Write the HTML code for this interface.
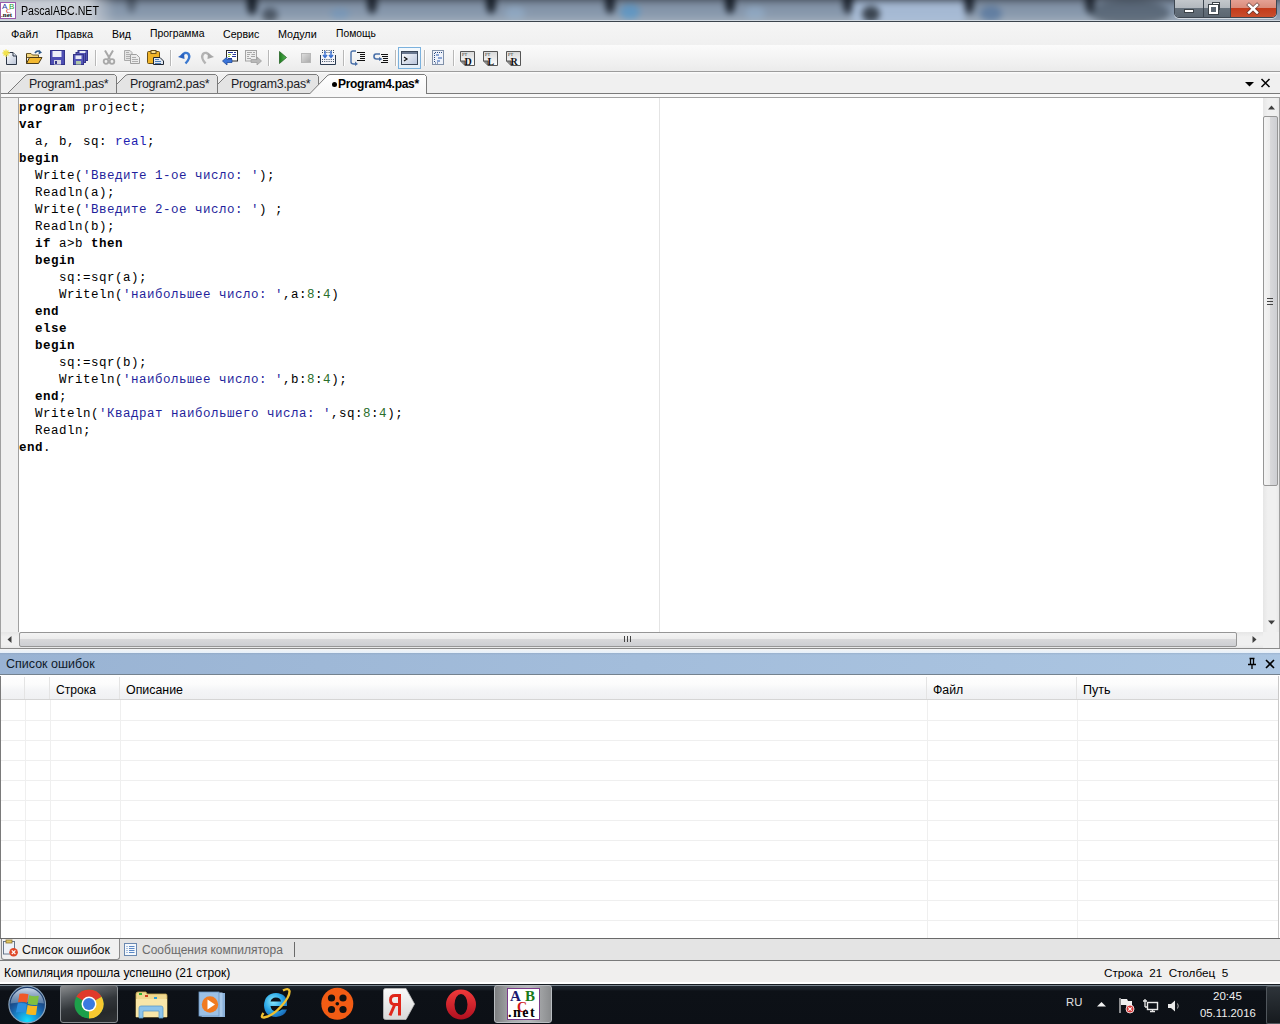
<!DOCTYPE html>
<html><head><meta charset="utf-8">
<style>
*{margin:0;padding:0;box-sizing:border-box}
html,body{width:1280px;height:1024px;overflow:hidden;background:#f0f0f0;font-family:"Liberation Sans",sans-serif;font-size:12px;color:#000;position:relative}
.a{position:absolute}
.t{position:absolute;white-space:nowrap;line-height:1}
svg{position:absolute;overflow:visible}
/* title */
#title{left:0;top:0;width:1280px;height:22px;overflow:hidden;
background:linear-gradient(#2e3946 0,#4a5868 2px,#7f90a5 5px,#8799ae 12px,#7a8ca2 19px,#d3dce6 20px,#d3dce6 21px,#3a424c 21px,#3a424c 22px)}
.notch{position:absolute;top:-4px;width:14px;height:18px;border-radius:50%;background:radial-gradient(ellipse at 50% 20%,rgba(10,15,22,.95),rgba(10,15,22,.6) 40%,rgba(10,15,22,0) 70%)}
.blob{position:absolute;border-radius:50%}
#menubar{left:0;top:22px;width:1280px;height:23px;background:linear-gradient(#f5f5f5,#f0f0f0)}
#toolbar{left:0;top:45px;width:1280px;height:26px;background:linear-gradient(#fbfbfb,#f5f5f5 40%,#ebebeb)}
.sep{position:absolute;top:5px;width:1px;height:16px;background:#b8b8b8;box-shadow:1px 0 0 #fff}
#tabstrip{left:0;top:71px;width:1280px;height:26px;background:linear-gradient(#fafafa 1px,#f0f0f0 2px);border-top:1px solid #9c9c9c}
#editor{left:0;top:97px;width:1280px;height:552px;background:#fff}
#code{left:19px;top:3px;font-family:"Liberation Mono",monospace;font-size:12.5px;letter-spacing:0.5px;line-height:17px;white-space:pre;color:#000}
.s{color:#1f1f9c}.n{color:#2a6e2a}.k{color:#2020b0}
#panelhdr{left:0;top:653px;width:1280px;height:23px;background:linear-gradient(rgba(130,150,175,.35),rgba(130,150,175,0) 2px,rgba(0,0,0,0) 21px,#74828f 21px,#74828f 22px,#fff 22px),linear-gradient(90deg,#99b3d3,#a3bddb 50%,#acc6e2)}
#gap{left:0;top:649px;width:1280px;height:4px;background:linear-gradient(#f4f4f4,#e6f0fa)}
#grid{left:0;top:676px;width:1280px;height:262px;background:#fff}
#bottomtabs{left:0;top:938px;width:1280px;height:23px;background:#e4e4e4}
#status{left:0;top:961px;width:1280px;height:23px;background:linear-gradient(#f0efee 21px,#fff 21px)}
#taskbar{left:0;top:984px;width:1280px;height:40px;background:linear-gradient(#1e252e 2px,#1a2129 5px,#0d1117 7px,#0c1016)}
</style></head><body>
<!-- TITLE -->
<div id="title" class="a">
<div id="glass" class="a" style="left:-10px;top:-6px;width:1300px;height:34px;filter:blur(3px);background:linear-gradient(#3c4552 0,#56606e 6px,#8090a4 10px,#8798ad 18px,#8d9db0 24px,#a2aebb 26px,#a2aebb 34px)">
<div class="blob" style="left:-10px;top:3px;width:135px;height:30px;border-radius:0;background:linear-gradient(90deg,#c8cdd5 80%,rgba(200,205,213,0))"></div>
<div class="blob" style="left:137px;top:0;width:9px;height:19px;border-radius:0 0 50% 50%;background:rgba(12,18,26,0.35)"></div>
<div class="blob" style="left:257px;top:0;width:10px;height:21px;border-radius:0 0 50% 50%;background:rgba(12,18,26,0.85)"></div>
<div class="blob" style="left:377px;top:0;width:10px;height:20px;border-radius:0 0 50% 50%;background:rgba(12,18,26,0.8)"></div>
<div class="blob" style="left:496px;top:0;width:10px;height:20px;border-radius:0 0 50% 50%;background:rgba(12,18,26,0.85)"></div>
<div class="blob" style="left:615px;top:0;width:10px;height:20px;border-radius:0 0 50% 50%;background:rgba(12,18,26,0.8)"></div>
<div class="blob" style="left:735px;top:0;width:10px;height:20px;border-radius:0 0 50% 50%;background:rgba(12,18,26,0.85)"></div>
<div class="blob" style="left:853px;top:0;width:10px;height:20px;border-radius:0 0 50% 50%;background:rgba(12,18,26,0.8)"></div>
<div class="blob" style="left:974px;top:0;width:10px;height:20px;border-radius:0 0 50% 50%;background:rgba(12,18,26,0.8)"></div>
<div class="blob" style="left:1095px;top:0;width:10px;height:20px;border-radius:0 0 50% 50%;background:rgba(12,18,26,0.75)"></div>
<div class="blob" style="left:272px;top:14px;width:16px;height:14px;background:rgba(25,32,42,.55)"></div>
<div class="blob" style="left:340px;top:14px;width:20px;height:12px;background:rgba(110,150,190,.55)"></div>
<div class="blob" style="left:630px;top:10px;width:20px;height:16px;background:rgba(70,150,210,.55)"></div>
<div class="blob" style="left:515px;top:12px;width:20px;height:14px;background:rgba(150,180,210,.5)"></div>
<div class="blob" style="left:755px;top:12px;width:20px;height:14px;background:rgba(150,180,210,.5)"></div>
<div class="blob" style="left:862px;top:8px;width:113px;height:22px;border-radius:4px;background:rgba(178,200,228,.7)"></div>
<div class="blob" style="left:872px;top:12px;width:18px;height:16px;background:rgba(40,48,58,.85)"></div>
<div class="blob" style="left:990px;top:12px;width:22px;height:16px;background:rgba(60,100,150,.5)"></div>
<div class="blob" style="left:1100px;top:6px;width:80px;height:26px;background:rgba(40,50,62,.45)"></div>
</div>
<div class="a" style="left:0;top:20px;width:1280px;height:1px;background:#d0d8e0"></div>
<div class="a" style="left:0;top:21px;width:1280px;height:1px;background:#3b434c"></div>
<!-- app icon -->
<div class="a" style="left:0px;top:2px;width:16px;height:17px;background:#fff;border:1px solid #9a5aaa"></div>
<div class="t" style="left:2px;top:3px;font-family:'Liberation Sans',sans-serif;font-size:8px;color:#2a3aa0">A</div>
<div class="t" style="left:9px;top:3px;font-family:'Liberation Sans',sans-serif;font-size:8px;color:#2a9a2a">B</div>
<div class="t" style="left:6px;top:8px;font-family:'Liberation Serif',serif;font-size:7px;color:#c01010">C</div>
<div class="t" style="left:1px;top:12px;font-family:'Liberation Serif',serif;font-weight:bold;font-size:7px;color:#111">.net</div>
<div class="t" style="left:21px;top:5px;font-size:12px;color:#000;transform:scaleX(0.885);transform-origin:0 0">PascalABC.NET</div>
<!-- window buttons -->
<div class="a" style="left:1174px;top:-2px;width:103px;height:20px;border:1px solid #3d4650;border-radius:0 0 5px 5px;box-shadow:0 1px 0 rgba(255,255,255,.6), inset 0 0 0 1px rgba(255,255,255,.45);overflow:hidden">
 <div class="a" style="left:0;top:0;width:28px;height:19px;background:linear-gradient(#c5c9cd 0,#b2b8be 9px,#66717c 9px,#5a6570 19px)"></div>
 <div class="a" style="left:28px;top:0;width:1px;height:19px;background:#3d4650"></div>
 <div class="a" style="left:29px;top:0;width:26px;height:19px;background:linear-gradient(#c5c9cd 0,#b2b8be 9px,#66717c 9px,#5a6570 19px)"></div>
 <div class="a" style="left:55px;top:0;width:1px;height:19px;background:#3d4650"></div>
 <div class="a" style="left:56px;top:0;width:47px;height:19px;background:linear-gradient(#e6a497 0,#d98b79 9px,#c33a1a 9px,#c9502f 19px)"></div>
</div>
<div class="a" style="left:1184px;top:9px;width:10px;height:4px;background:#fff;border:1px solid #3b4248"></div>
<div class="a" style="left:1212px;top:2px;width:8px;height:8px;border:1px solid #3b4248;background:#fff"></div>
<div class="a" style="left:1209px;top:5px;width:9px;height:9px;border:2px solid #fff;outline:1px solid #3b4248;background:#5a6570"></div>
<svg style="left:1246px;top:3px" width="14" height="11"><path d="M3 2 L11 9.5 M11 2 L3 9.5" stroke="#4a3030" stroke-width="4" stroke-linecap="square" opacity=".7"/><path d="M3 2 L11 9.5 M11 2 L3 9.5" stroke="#fff" stroke-width="2.4" stroke-linecap="square"/></svg>
</div>

<!-- MENU -->
<div id="menubar" class="a">
<span class="t" style="left:11px;top:7px;font-size:11px">Файл</span>
<span class="t" style="left:56px;top:7px;font-size:11px">Правка</span>
<span class="t" style="left:112px;top:7px;font-size:10.5px">Вид</span>
<span class="t" style="left:150px;top:7px;font-size:10.4px">Программа</span>
<span class="t" style="left:223px;top:7px;font-size:10.6px">Сервис</span>
<span class="t" style="left:278px;top:7px;font-size:10.8px">Модули</span>
<span class="t" style="left:336px;top:7px;font-size:10.3px">Помощь</span>
</div>

<!-- TOOLBAR -->
<div id="toolbar" class="a">
<svg style="left:2px;top:4px" width="16" height="16" viewBox="0 0 16 16">
 <defs><linearGradient id="pg" x1="0" y1="0" x2="1" y2="1"><stop offset="0" stop-color="#fff"/><stop offset="1" stop-color="#b9c3d6"/></linearGradient></defs>
 <path d="M4.5 3.5 H11 L14.5 7 V15.5 H4.5 Z" fill="url(#pg)" stroke="#2c3646"/>
 <path d="M11 3.5 V7 H14.5" fill="#dde3ee" stroke="#2c3646"/>
 <path d="M4 0.5 V8 M0.5 4 H8 M1.5 1.5 L6.5 6.5 M6.5 1.5 L1.5 6.5" stroke="#f2e24a" stroke-width="1.3"/>
</svg>
<svg style="left:26px;top:5px" width="17" height="15" viewBox="0 0 17 15">
 <path d="M0.5 3.5 H5 L6.5 5 H12.5 V7.5 H0.5 Z" fill="#f3d57a" stroke="#6e5a2a"/>
 <path d="M0.5 13.5 V4 M0.5 13.5 L3.5 7.5 H16 L12.5 13.5 Z" fill="#f2b830" stroke="#4a3a18"/>
 <path d="M9 3 Q11 0 14 1.5" fill="none" stroke="#2f5a8a" stroke-width="1.6"/>
 <path d="M13 0 L16 2.5 L12.5 4.5 Z" fill="#2f5a8a"/>
</svg>
<svg style="left:50px;top:5px" width="15" height="15" viewBox="0 0 15 15">
 <rect x="0.5" y="0.5" width="14" height="14" fill="#4e4fb4" stroke="#34358a"/>
 <rect x="2.5" y="1" width="9" height="6" fill="#eef0f8"/>
 <rect x="4" y="10" width="7" height="4.5" fill="#d8d8e4"/>
 <rect x="5" y="11" width="2" height="3" fill="#34358a"/>
</svg>
<svg style="left:73px;top:5px" width="15" height="15" viewBox="0 0 15 15">
 <rect x="5" y="0.5" width="9.5" height="10" fill="#5556b8" stroke="#34358a"/>
 <rect x="3" y="2.5" width="9.5" height="10" fill="#5556b8" stroke="#34358a"/>
 <rect x="0.5" y="4.5" width="10" height="10" fill="#5556b8" stroke="#34358a"/>
 <rect x="6.5" y="1" width="6" height="2" fill="#e8eaf6"/>
 <rect x="2.5" y="5.5" width="6" height="3.5" fill="#e8eaf6"/>
 <rect x="3" y="11" width="5" height="3.5" fill="#b0c8a8"/>
</svg>
<div class="sep" style="left:95px"></div>
<svg style="left:103px;top:5px" width="12" height="15" viewBox="0 0 12 15">
 <path d="M2 0.5 L7 9 M10 0.5 L5 9" stroke="#a8a8a8" stroke-width="2"/>
 <circle cx="3" cy="11.5" r="2.3" fill="none" stroke="#a8a8a8" stroke-width="1.8"/>
 <circle cx="9" cy="11.5" r="2.3" fill="none" stroke="#a8a8a8" stroke-width="1.8"/>
</svg>
<svg style="left:124px;top:5px" width="16" height="14" viewBox="0 0 16 14">
 <path d="M0.5 0.5 H6 L8 2.5 V10.5 H0.5 Z" fill="#e4e4e4" stroke="#aaa"/>
 <path d="M6.5 4.5 H12.5 L15.5 7.5 V13.5 H6.5 Z" fill="#ececec" stroke="#a0a0a0"/>
 <path d="M2 2.5 H5 M2 4.5 H6 M2 6.5 H6 M2 8.5 H6 M8 7.5 H12 M8 9.5 H14 M8 11.5 H14" stroke="#a8a8a8" stroke-width=".9"/>
</svg>
<svg style="left:147px;top:5px" width="17" height="15" viewBox="0 0 17 15">
 <rect x="0.5" y="1.5" width="12" height="12" rx="1" fill="#f0b428" stroke="#6a5018"/>
 <rect x="4" y="0.5" width="5" height="3" fill="#f8e090" stroke="#6a5018"/>
 <path d="M6.5 7.5 H13 L16.5 11 V14.5 H6.5 Z" fill="#dfe6f0" stroke="#1e2530"/>
 <path d="M8 9.5 H12 M8 11.5 H14 M8 13.5 H14" stroke="#3a70b0" stroke-width=".9"/>
</svg>
<div class="sep" style="left:170px"></div>
<svg style="left:178px;top:5px" width="13" height="15" viewBox="0 0 13 15">
 <path d="M3.5 6 Q7 1 10.5 4 Q13 8 7.5 13.5" fill="none" stroke="#3a78d0" stroke-width="2.4"/>
 <path d="M0 7 L6 3 L6.5 9 Z" fill="#2a62c0"/>
</svg>
<svg style="left:200px;top:5px" width="14" height="15" viewBox="0 0 14 15">
 <path d="M10 6 Q6.5 1 3 4 Q0.5 8 5.5 13.5" fill="none" stroke="#b4b4b4" stroke-width="2.4"/>
 <path d="M14 7 L8 3 L7.5 9 Z" fill="#a8a8a8"/>
</svg>
<svg style="left:222px;top:5px" width="17" height="16" viewBox="0 0 17 16">
 <rect x="4.5" y="0.5" width="11" height="10.5" fill="#fff" stroke="#2a2a2a"/>
 <path d="M6 2.5 H11 M12 2.5 H14 M6 4.5 H9 M10.5 4.5 H14 M6 6.5 H8 M10 6.5 H14 M6 8.5 H10" stroke="#2a3a9a"/>
 <path d="M6 4.5 H9 M6 6.5 H8" stroke="#8ab83a"/>
 <path d="M0.5 11 L5 7 V9.5 H10 V12.5 H5 V15 Z" fill="#3a74d8" stroke="#1e4a9a" stroke-width="0.8"/>
</svg>
<svg style="left:245px;top:5px" width="17" height="16" viewBox="0 0 17 16">
 <rect x="0.5" y="0.5" width="11" height="10.5" fill="#eee" stroke="#a4a4a4"/>
 <path d="M2 2.5 H7 M8 2.5 H10 M2 4.5 H5 M6.5 4.5 H10 M2 6.5 H4 M6 6.5 H10 M2 8.5 H6" stroke="#a8a8a8"/>
 <path d="M16.5 11 L12 7 V9.5 H6 V12.5 H12 V15 Z" fill="#b8b8b8" stroke="#a0a0a0" stroke-width="0.8"/>
</svg>
<div class="sep" style="left:268px"></div>
<svg style="left:279px;top:6px" width="8" height="13" viewBox="0 0 8 13">
 <defs><linearGradient id="gp" x1="0" y1="0" x2="1" y2="0"><stop offset="0" stop-color="#1d7a1d"/><stop offset="1" stop-color="#5ab85a"/></linearGradient></defs>
 <path d="M0.5 0.5 L7.5 6.5 L0.5 12.5 Z" fill="url(#gp)" stroke="#1a5a1a" stroke-width="0.7"/>
</svg>
<svg style="left:301px;top:8px" width="10" height="10" viewBox="0 0 10 10">
 <defs><linearGradient id="gs" x1="0" y1="0" x2="1" y2="1"><stop offset="0" stop-color="#e0e0e0"/><stop offset="1" stop-color="#a8a8a8"/></linearGradient></defs>
 <rect x="0.5" y="0.5" width="9" height="9" fill="url(#gs)" stroke="#b8b8b8"/>
</svg>
<svg style="left:320px;top:5px" width="16" height="15" viewBox="0 0 16 15">
 <path d="M0.5 5 V14.5 H15.5 V5" fill="#f4f4f8" stroke="#2a3a50"/>
 <path d="M2 0.5 H14 M2 2.5 H14 M2 9.5 H14 M2 11.5 H14" stroke="#3a4a60" stroke-dasharray="1 1.2"/>
 <path d="M5 1 V7 M3 5 L5 7.5 L7 5 M11 1 V7 M9 5 L11 7.5 L13 5" stroke="#3a70d0" stroke-width="1.4" fill="none"/>
</svg>
<div class="sep" style="left:343px"></div>
<svg style="left:350px;top:5px" width="16" height="16" viewBox="0 0 16 16">
 <path d="M6 1 H3 Q1 1 1 3 V12 Q1 14 4 14 H6" fill="none" stroke="#4a70a8" stroke-width="1.4"/>
 <path d="M5 11.5 L8 14 L5 16 Z" fill="#4a70a8"/>
 <path d="M7 2.5 H15 M10 4.5 H15 M10 6.5 H15 M10 8.5 H15 M7 10.5 H15" stroke="#111" stroke-width="1"/>
</svg>
<svg style="left:373px;top:5px" width="16" height="16" viewBox="0 0 16 16">
 <path d="M7 4 H3 Q1 4 1 6.5 Q1 9 3.5 9 H7" fill="none" stroke="#4a70a8" stroke-width="1.6"/>
 <path d="M6 7 L9.5 9 L6 11 Z" fill="#4a70a8"/>
 <path d="M8 4.5 H15 M9 6.5 H15 M10 8.5 H15 M10 10.5 H15 M8 12.5 H15" stroke="#111" stroke-width="1"/>
</svg>
<div class="sep" style="left:395px"></div>
<div class="a" style="left:398px;top:2px;width:23px;height:22px;border:1px solid #7bb1dd;background:linear-gradient(#f4f9fd,#e3eef8)"></div>
<svg style="left:401px;top:6px" width="17" height="14" viewBox="0 0 17 14">
 <defs><linearGradient id="gc" x1="0" y1="0" x2="1" y2="1"><stop offset="0" stop-color="#fff"/><stop offset="1" stop-color="#b8c4dc"/></linearGradient></defs>
 <rect x="0.5" y="0.5" width="16" height="13" fill="url(#gc)" stroke="#3a4658"/>
 <rect x="1" y="1" width="15" height="2" fill="#6a7890"/>
 <path d="M3 6 L6 8 L3 10" fill="none" stroke="#111" stroke-width="1.2"/>
</svg>
<div class="sep" style="left:424px"></div>
<svg style="left:432px;top:5px" width="12" height="15" viewBox="0 0 12 15">
 <rect x="0.5" y="0.5" width="11" height="14" fill="#eef2fa" stroke="#8090a8"/>
 <path d="M3 2.5 H10 M2.5 3 V13 M3 13 H6" stroke="#2a4a80" stroke-dasharray="1 1"/>
 <path d="M4 5 H7 M6 8 H10 M5 11 H8" stroke="#2a5ab0" stroke-width="1.2"/>
</svg>
<div class="sep" style="left:453px"></div>
<svg style="left:460px;top:6px" width="15" height="15" viewBox="0 0 15 15">
 <defs><linearGradient id="gdD" x1="0" y1="0" x2="0" y2="1"><stop offset="0" stop-color="#d8d8d8"/><stop offset="1" stop-color="#fff"/></linearGradient></defs>
 <path d="M0.5 0.5 H14.5 V14.5 H5 L0.5 10 Z" fill="url(#gdD)" stroke="#555"/>
 <path d="M0.5 10 L5 10 V14.5" fill="#888" stroke="#555"/>
 <text x="2" y="5" font-family="Liberation Serif" font-size="4.5" fill="#333">PT</text>
 <text x="4.5" y="13.5" font-family="Liberation Serif" font-weight="bold" font-size="10" fill="#111">D</text>
</svg>
<svg style="left:483px;top:6px" width="15" height="15" viewBox="0 0 15 15">
 <defs><linearGradient id="gdL" x1="0" y1="0" x2="0" y2="1"><stop offset="0" stop-color="#d8d8d8"/><stop offset="1" stop-color="#fff"/></linearGradient></defs>
 <path d="M0.5 0.5 H14.5 V14.5 H5 L0.5 10 Z" fill="url(#gdL)" stroke="#555"/>
 <path d="M0.5 10 L5 10 V14.5" fill="#888" stroke="#555"/>
 <text x="2" y="5" font-family="Liberation Serif" font-size="4.5" fill="#333">PT</text>
 <text x="4.5" y="13.5" font-family="Liberation Serif" font-weight="bold" font-size="10" fill="#111">L</text>
</svg>
<svg style="left:506px;top:6px" width="15" height="15" viewBox="0 0 15 15">
 <defs><linearGradient id="gdR" x1="0" y1="0" x2="0" y2="1"><stop offset="0" stop-color="#d8d8d8"/><stop offset="1" stop-color="#fff"/></linearGradient></defs>
 <path d="M0.5 0.5 H14.5 V14.5 H5 L0.5 10 Z" fill="url(#gdR)" stroke="#555"/>
 <path d="M0.5 10 L5 10 V14.5" fill="#888" stroke="#555"/>
 <text x="2" y="5" font-family="Liberation Serif" font-size="4.5" fill="#333">PT</text>
 <text x="4.5" y="13.5" font-family="Liberation Serif" font-weight="bold" font-size="10" fill="#111">R</text>
</svg>

</div>

<!-- TABS -->
<div id="tabstrip" class="a"></div>
<div class="a" style="left:0;top:94px;width:1280px;height:3px;background:#f8f8f8"></div><svg style="left:0;top:0" width="1280" height="100" viewBox="0 0 1280 100"><defs><linearGradient id="atab" x1="0" y1="0" x2="0" y2="1"><stop offset="0" stop-color="#ffffff"/><stop offset="1" stop-color="#f6f6f6"/></linearGradient></defs><rect x="0" y="93" width="1280" height="1" fill="#7a7a7a"/><path d="M208.5 93.5 L225.0 77 Q227.0 74.5 229.0 74.5 H316.5 L318.5 76.5 V93.5 Z" fill="#e4e4e4" stroke="#7a7a7a" stroke-width="1"/><path d="M107.5 93.5 L124.0 77 Q126.0 74.5 128.0 74.5 H215.5 L217.5 76.5 V93.5 Z" fill="#e4e4e4" stroke="#7a7a7a" stroke-width="1"/><path d="M7.5 93.5 L24.0 77 Q26.0 74.5 28.0 74.5 H114.5 L116.5 76.5 V93.5 Z" fill="#e4e4e4" stroke="#7a7a7a" stroke-width="1"/><rect x="310" y="93" width="116" height="4" fill="#f8f8f8"/><path d="M309.5 94 L326.0 77 Q328.0 74.5 330.0 74.5 H424.5 L426.5 76.5 V94" fill="url(#atab)" stroke="#7a7a7a" stroke-width="1"/><rect x="0" y="72" width="1" height="25" fill="#a0a0a0"/></svg><span class="t" style="left:29px;top:78px;font-size:12.4px;letter-spacing:-0.25px;color:#1b1b26">Program1.pas*</span>
<span class="t" style="left:130px;top:78px;font-size:12.4px;letter-spacing:-0.25px;color:#1b1b26">Program2.pas*</span>
<span class="t" style="left:231px;top:78px;font-size:12.4px;letter-spacing:-0.25px;color:#1b1b26">Program3.pas*</span>
<div class="a" style="left:332px;top:82px;width:5px;height:5px;border-radius:50%;background:#000"></div><span class="t" style="left:338px;top:78px;font-size:12px;letter-spacing:-0.3px;font-weight:bold;color:#000">Program4.pas*</span>
<svg style="left:1245px;top:82px" width="9" height="5"><path d="M0 0 H9 L4.5 4.5 Z" fill="#000"/></svg>
<svg style="left:1260px;top:78px" width="11" height="10"><path d="M1.5 1 L9.5 9 M9.5 1 L1.5 9" stroke="#000" stroke-width="1.5"/></svg>


<!-- EDITOR -->
<div id="editor" class="a">
<div class="a" style="left:0;top:0;width:1280px;height:1px;background:#a0a0a0"></div>
<div class="a" style="left:0;top:0;width:1px;height:552px;background:#a0a0a0"></div>
<div class="a" style="left:1279px;top:0;width:1px;height:552px;background:#a0a0a0"></div>
<div class="a" style="left:0;top:551px;width:1280px;height:1px;background:#8a8a8a"></div>
<div class="a" style="left:1px;top:1px;width:17px;height:534px;background:#f0f0f0"></div>
<div class="a" style="left:18px;top:1px;width:1px;height:534px;background:#a0a0a0"></div>
<div class="a" style="left:659px;top:1px;width:1px;height:534px;background:#e4e4e4"></div>
<div id="code" class="a"><b>program</b> project;
<b>var</b>
  a, b, sq: <span class="k">real</span>;
<b>begin</b>
  Write(<span class="s">'Введите 1-ое число: '</span>);
  Readln(a);
  Write(<span class="s">'Введите 2-ое число: '</span>) ;
  Readln(b);
  <b>if</b> a&gt;b <b>then</b>
  <b>begin</b>
     sq:=sqr(a);
     Writeln(<span class="s">'наибольшее число: '</span>,a:<span class="n">8</span>:<span class="n">4</span>)
  <b>end</b>
  <b>else</b>
  <b>begin</b>
     sq:=sqr(b);
     Writeln(<span class="s">'наибольшее число: '</span>,b:<span class="n">8</span>:<span class="n">4</span>);
  <b>end</b>;
  Writeln(<span class="s">'Квадрат наибольшего числа: '</span>,sq:<span class="n">8</span>:<span class="n">4</span>);
  Readln;
<b>end</b>.</div>
<!-- vscroll -->
<div class="a" style="left:1263px;top:1px;width:16px;height:534px;background:linear-gradient(90deg,#e6e6e6,#f0f0f0 30%,#f0f0f0 80%,#e8e8e8)"></div>
<svg style="left:1268px;top:8px" width="8" height="5"><path d="M0 4.5 L3.5 0.5 L7 4.5 Z" fill="#404040"/></svg>
<div class="a" style="left:1263px;top:19px;width:15px;height:370px;border:1px solid #969696;border-radius:2px;background:linear-gradient(90deg,#f4f4f4 0,#ececec 45%,#d8d8da 50%,#cdced2 100%)"></div>
<div class="a" style="left:1267px;top:201px;width:6px;height:1px;background:#444;box-shadow:0 3px 0 #444,0 6px 0 #444"></div>
<svg style="left:1268px;top:523px" width="8" height="5"><path d="M0 0.5 L7 0.5 L3.5 4.5 Z" fill="#404040"/></svg>
<!-- hscroll -->
<div class="a" style="left:1px;top:535px;width:1262px;height:16px;background:linear-gradient(#e6e6e6,#f0f0f0 30%,#f0f0f0 80%,#e8e8e8)"></div>
<svg style="left:7px;top:539px" width="5" height="8"><path d="M4.5 0 L0.5 3.5 L4.5 7 Z" fill="#404040"/></svg>
<div class="a" style="left:19px;top:535px;width:1218px;height:15px;border:1px solid #969696;border-radius:2px;background:linear-gradient(#f4f4f4 0,#ececec 45%,#d8d8da 50%,#cdced2 100%)"></div>
<div class="a" style="left:624px;top:539px;width:1px;height:6px;background:#444;box-shadow:3px 0 0 #444,6px 0 0 #444"></div>
<svg style="left:1252px;top:539px" width="5" height="8"><path d="M0.5 0 L4.5 3.5 L0.5 7 Z" fill="#404040"/></svg>
<div class="a" style="left:1263px;top:535px;width:16px;height:16px;background:#f0f0f0"></div>

</div>

<!-- PANEL -->
<div id="gap" class="a"></div>
<div id="panelhdr" class="a">
<span class="t" style="left:6px;top:5px;font-size:12.5px;color:#0e1a2a">Список ошибок</span>
<svg style="left:1248px;top:5px" width="8" height="11" viewBox="0 0 8 11"><path d="M1.5 0.5 H6.5 M2.5 0.5 V6 M5.5 0.5 V6 M0 6.5 H8 M4 6.5 V11" stroke="#000" stroke-width="1.3" fill="none"/></svg>
<svg style="left:1265px;top:6px" width="10" height="10"><path d="M1 1 L9 9 M9 1 L1 9" stroke="#000" stroke-width="1.6"/></svg>
</div>
<div id="grid" class="a">
<div class="a" style="left:0;top:0;width:1px;height:262px;background:#7a7a7a"></div>
<div class="a" style="left:1278px;top:0;width:1px;height:262px;background:#c8c8c8"></div>
<div class="a" style="left:1px;top:0;width:1277px;height:23px;background:linear-gradient(#fefefe 0,#fcfcfc 35%,#f3f4f6 65%,#eff0f2)"></div>
<div class="a" style="left:1px;top:23px;width:1277px;height:1px;background:#d5d5d5"></div>
<div class="a" style="left:24px;top:1px;width:1px;height:22px;background:#e4e4e4"></div>
<div class="a" style="left:49px;top:1px;width:1px;height:22px;background:#e4e4e4"></div>
<div class="a" style="left:119px;top:1px;width:1px;height:22px;background:#e4e4e4"></div>
<div class="a" style="left:926px;top:1px;width:1px;height:22px;background:#e4e4e4"></div>
<div class="a" style="left:1076px;top:1px;width:1px;height:22px;background:#e4e4e4"></div>
<div class="a" style="left:1px;top:44px;width:1277px;height:1px;background:#efefef"></div>
<div class="a" style="left:1px;top:64px;width:1277px;height:1px;background:#efefef"></div>
<div class="a" style="left:1px;top:84px;width:1277px;height:1px;background:#efefef"></div>
<div class="a" style="left:1px;top:104px;width:1277px;height:1px;background:#efefef"></div>
<div class="a" style="left:1px;top:124px;width:1277px;height:1px;background:#efefef"></div>
<div class="a" style="left:1px;top:144px;width:1277px;height:1px;background:#efefef"></div>
<div class="a" style="left:1px;top:164px;width:1277px;height:1px;background:#efefef"></div>
<div class="a" style="left:1px;top:184px;width:1277px;height:1px;background:#efefef"></div>
<div class="a" style="left:1px;top:204px;width:1277px;height:1px;background:#efefef"></div>
<div class="a" style="left:1px;top:224px;width:1277px;height:1px;background:#efefef"></div>
<div class="a" style="left:1px;top:244px;width:1277px;height:1px;background:#efefef"></div>
<div class="a" style="left:25px;top:24px;width:1px;height:238px;background:#efefef"></div>
<div class="a" style="left:50px;top:24px;width:1px;height:238px;background:#efefef"></div>
<div class="a" style="left:120px;top:24px;width:1px;height:238px;background:#efefef"></div>
<div class="a" style="left:927px;top:24px;width:1px;height:238px;background:#efefef"></div>
<div class="a" style="left:1077px;top:24px;width:1px;height:238px;background:#efefef"></div>
<span class="t" style="left:56px;top:8px;font-size:12.1px">Строка</span>
<span class="t" style="left:126px;top:8px;font-size:12.4px">Описание</span>
<span class="t" style="left:933px;top:8px;font-size:12.3px">Файл</span>
<span class="t" style="left:1083px;top:8px;font-size:12.5px">Путь</span>

</div>
<div id="bottomtabs" class="a">
<div class="a" style="left:0;top:0;width:1280px;height:1px;background:#6a6a6a"></div>
<div class="a" style="left:0;top:22px;width:1280px;height:1px;background:#7a7a7a"></div>
<div class="a" style="left:1px;top:1px;width:119px;height:21px;background:#f0f0f0;border:1px solid #8a8a8a;border-top:none;border-radius:0 0 3px 3px"></div>
<svg style="left:3px;top:2px" width="16" height="17" viewBox="0 0 16 17">
 <rect x="0.5" y="1.5" width="11" height="12.5" fill="#eef2f8" stroke="#5a6a80" stroke-width=".9"/>
 <rect x="3" y="0" width="6" height="3" fill="#e0c860" stroke="#8a7030" stroke-width=".8"/>
 <circle cx="10.6" cy="12.2" r="4.3" fill="#e04a2a"/>
 <path d="M8.8 10.4 L12.4 14 M12.4 10.4 L8.8 14" stroke="#fff" stroke-width="1.1"/>
</svg>
<span class="t" style="left:22px;top:6px;font-size:12.4px;color:#111">Список ошибок</span>
<svg style="left:124px;top:5px" width="13" height="13" viewBox="0 0 13 13">
 <rect x="0.5" y="0.5" width="12" height="12" fill="#f4f8fc" stroke="#6a88b0"/>
 <path d="M2.5 3.5 H3.5 M5 3.5 H10.5 M2.5 5.5 H3.5 M5 5.5 H10.5 M2.5 7.5 H3.5 M5 7.5 H10.5 M2.5 9.5 H3.5 M5 9.5 H10.5" stroke="#4a7ac0" stroke-width=".9"/>
</svg>
<span class="t" style="left:142px;top:6px;font-size:12px;color:#6a6a6a">Сообщения компилятора</span>
<div class="a" style="left:294px;top:4px;width:1px;height:15px;background:#6a6a6a"></div>

</div>
<div id="status" class="a">
<span class="t" style="left:4px;top:6px;font-size:12.1px">Компиляция прошла успешно (21 строк)</span>
<span class="t" style="left:1104px;top:6px;font-size:11.7px;white-space:pre">Строка  21  Столбец  5</span>
</div>
<div id="taskbar" class="a">
<div class="a" style="left:0;top:0;width:1280px;height:1px;background:#161b21"></div>
<div class="a" style="left:0;top:1px;width:1280px;height:1px;background:#7a8690"></div>
<!-- start orb -->
<svg style="left:8px;top:1px" width="39" height="39" viewBox="0 0 39 39">
 <defs>
  <radialGradient id="orb" cx="50%" cy="95%" r="75%"><stop offset="0" stop-color="#10e0ff"/><stop offset=".35" stop-color="#1a98d8"/><stop offset=".7" stop-color="#1a5aa0"/><stop offset="1" stop-color="#1a3a6a"/></radialGradient>
  <linearGradient id="orbg" x1="0" y1="0" x2="0" y2="1"><stop offset="0" stop-color="#e0ecf8" stop-opacity=".9"/><stop offset="1" stop-color="#8aa8c8" stop-opacity=".55"/></linearGradient>
 </defs>
 <circle cx="19.2" cy="19.5" r="18.3" fill="url(#orb)" stroke="#8aa4bc" stroke-width="1.2"/>
 <path d="M2.5 18.5 A16.8 16.8 0 0 1 36 18.5 Q19 15.5 2.5 18.5 Z" fill="url(#orbg)"/>
 <path d="M11.5 8.8 Q15 7.8 20.5 9.2 L19 17.8 Q14.5 16.2 10 17.2 Z" fill="#f05828"/>
 <path d="M21.2 10.2 Q25.5 11.8 30.8 10.8 L29.5 19.8 Q24.5 20.5 19.8 18.8 Z" fill="#80c040"/>
 <path d="M9.8 18.3 Q14.5 17.3 18.8 18.9 L17.4 27.8 Q12.8 26.2 7.9 27.4 Z" fill="#2a90e0"/>
 <path d="M19.6 20 Q24.3 21.6 29.3 20.8 L28 29.8 Q22.8 30.5 18.2 28.9 Z" fill="#f8b820"/>
</svg>
<!-- chrome button -->
<div class="a" style="left:60px;top:1px;width:58px;height:38px;border:1px solid #8a8e92;border-radius:3px;background:linear-gradient(165deg,#8a8c8e 0%,#5a5e62 25%,#32363a 50%,#26292c 75%,#2e3134 100%)"></div>
<svg style="left:74px;top:5px" width="30" height="30" viewBox="0 0 30 30">
 <circle cx="15" cy="15" r="14.5" fill="#1da04a"/>
 <path d="M15 15 L2.4 7.7 A14.5 14.5 0 0 1 27.6 7.7 Z" fill="#e0392b"/>
 <path d="M15 15 L27.6 7.7 A14.5 14.5 0 0 1 15 29.5 Z" fill="#f8c830"/>
 <circle cx="15" cy="15" r="7.5" fill="#fff"/>
 <circle cx="15" cy="15" r="6" fill="#3a7ae0"/>
</svg>
<!-- explorer -->
<svg style="left:135px;top:6px" width="33" height="30" viewBox="0 0 33 30">
 <path d="M1 4 Q1 2 3 2 H11 L12 4 H31 Q32 4 32 6 V27 H1 Z" fill="#f0d890" stroke="#c8a850" stroke-width=".8"/>
 <rect x="4" y="3" width="3" height="2" fill="#30b030"/>
 <rect x="10" y="5" width="3" height="2" fill="#d04020"/>
 <rect x="19" y="7" width="3" height="2" fill="#30a0d8"/>
 <path d="M1 9 H32 V27 H1 Z" fill="#f8e6a8"/>
 <path d="M4 28 V18 Q4 16 6 16 H26 Q28 16 28 18 V28 H24 V21 H8 V28 Z" fill="#8cc4ec" stroke="#5a9ac8" stroke-width=".8"/>
</svg>
<!-- wmp -->
<svg style="left:199px;top:8px" width="27" height="26" viewBox="0 0 27 26">
 <rect x="3" y="1" width="23" height="24" fill="#8ab0d8"/>
 <rect x="1.5" y="0.5" width="22" height="24" fill="#a8c8e8"/>
 <rect x="0" y="0" width="20" height="24" fill="#9cc0e4" stroke="#6a94c0" stroke-width=".8"/>
 <circle cx="11" cy="12.5" r="8.2" fill="#f07a20"/>
 <path d="M8.5 7.5 L16 12.5 L8.5 17.5 Z" fill="#fff"/>
</svg>
<!-- IE -->
<svg style="left:259px;top:4px" width="32" height="32" viewBox="0 0 32 32">
 <defs><radialGradient id="ie" cx="40%" cy="35%" r="70%"><stop offset="0" stop-color="#8ae8fa"/><stop offset=".55" stop-color="#2aa8e8"/><stop offset="1" stop-color="#1a6ab8"/></radialGradient></defs>
 <path d="M28 18 H11.5 Q12 23 17.5 23.5 Q21 23.5 23 21.5 H28 Q25.5 28.5 17 29 Q5.5 28.5 5 17.5 Q5.5 5.5 17 5 Q28 5.5 28 16 Z M11.5 13.5 H22 Q21.5 9.5 16.8 9.5 Q12.5 9.8 11.5 13.5 Z" fill="url(#ie)" fill-rule="evenodd"/>
 <path d="M4.5 25 Q1 29.5 5 29.5 Q13 28.5 22.5 18 Q31 8.5 30.5 3 Q29.5 -0.5 24 2.5" fill="none" stroke="#f0c030" stroke-width="2.4"/>
</svg>
<!-- film reel -->
<svg style="left:321px;top:3px" width="33" height="33" viewBox="0 0 33 33">
 <circle cx="16.3" cy="16.8" r="16" fill="#f25c14"/>
 <circle cx="10.5" cy="11" r="3.6" fill="#111"/><circle cx="22" cy="11" r="3.6" fill="#111"/>
 <circle cx="10.5" cy="22.5" r="3.6" fill="#111"/><circle cx="22" cy="22.5" r="3.6" fill="#111"/>
 <circle cx="16.3" cy="16.8" r="1.8" fill="#111"/>
</svg>
<!-- yandex -->
<svg style="left:383px;top:4px" width="33" height="33" viewBox="0 0 33 33">
 <defs><linearGradient id="ya" x1="0" y1="0" x2="0" y2="1"><stop offset="0" stop-color="#fafafa"/><stop offset="1" stop-color="#d8d8d8"/></linearGradient></defs>
 <path d="M2.5 0.5 H23 L31.5 16 L23 31.5 H2.5 Q0.5 31.5 0.5 29.5 V2.5 Q0.5 0.5 2.5 0.5 Z" fill="url(#ya)" stroke="#bbb" stroke-width=".8"/>
 <path d="M16.5 6 V27.5" stroke="#e0261a" stroke-width="3"/><path d="M16.5 7.5 H12 Q7.5 7.5 7.5 12 Q7.5 16.5 12 16.5 H16.5" fill="none" stroke="#e0261a" stroke-width="2.8"/><path d="M12 16 L7 27.5" stroke="#e0261a" stroke-width="3"/>
</svg>
<!-- opera -->
<svg style="left:445px;top:5px" width="32" height="31" viewBox="0 0 32 31">
 <defs><linearGradient id="op" x1="0" y1="0" x2="0" y2="1"><stop offset="0" stop-color="#f03a3a"/><stop offset="1" stop-color="#b01020"/></linearGradient></defs>
 <path d="M16 0.5 A15 15 0 1 1 16 30.5 A15 15 0 1 1 16 0.5 Z M16 5 A6.5 10.5 0 1 0 16 26 A6.5 10.5 0 1 0 16 5 Z" fill="url(#op)" fill-rule="evenodd"/>
</svg>
<!-- pascal button -->
<div class="a" style="left:494px;top:1px;width:58px;height:38px;border:1px solid #b8bcc0;border-radius:3px;background:linear-gradient(90deg,#7c7e80 0%,#a8aaac 30%,#b8babc 60%,#8a8c8e 100%)"></div>
<div class="a" style="left:507px;top:4px;width:33px;height:32px;background:#fff;border:1.5px solid #7a3a8a"></div>
<span class="t" style="left:510px;top:5px;font-family:'Liberation Serif',serif;font-weight:bold;font-size:15px;color:#1a1a70">A</span>
<span class="t" style="left:525px;top:5px;font-family:'Liberation Serif',serif;font-weight:bold;font-size:15px;color:#1a7a1a">B</span>
<span class="t" style="left:517px;top:17px;font-family:'Liberation Serif',serif;font-weight:bold;font-size:14px;color:#d01818">C</span>
<span class="t" style="left:508px;top:22px;font-family:'Liberation Serif',serif;font-weight:bold;font-size:14px;letter-spacing:1.5px;color:#000">.net</span>
<!-- tray -->
<span class="t" style="left:1066px;top:13px;font-size:11.3px;color:#e0e0e0">RU</span>
<svg style="left:1097px;top:18px" width="9" height="5"><path d="M0 4.5 L4.5 0 L9 4.5 Z" fill="#f0f0f0"/></svg>
<svg style="left:1119px;top:14px" width="16" height="15" viewBox="0 0 16 15">
 <path d="M1 0 V15" stroke="#e0e0e0" stroke-width="1.2"/>
 <path d="M2 1 H8 L9 3 H13 V9 H8 L7 7 H2 Z" fill="#f0f0f0"/>
 <circle cx="11" cy="11" r="4" fill="#d83a3a" stroke="#fff" stroke-width=".8"/>
 <path d="M9.3 9.3 L12.7 12.7 M12.7 9.3 L9.3 12.7" stroke="#fff" stroke-width="1.1"/>
</svg>
<svg style="left:1143px;top:15px" width="15" height="14" viewBox="0 0 15 14">
 <rect x="4.5" y="3.5" width="10" height="7" fill="none" stroke="#e8e8e8" stroke-width="1.4"/>
 <path d="M7 12.5 H12 M9.5 10.5 V12.5 M2 0 V8 M0 2 H4 M2 8 H5" stroke="#e8e8e8" stroke-width="1.3"/>
</svg>
<svg style="left:1168px;top:16px" width="13" height="12" viewBox="0 0 13 12">
 <path d="M0 4 H3 L7 0.5 V11.5 L3 8 H0 Z" fill="#e8e8e8"/>
 <path d="M9.5 3.5 Q11 6 9.5 8.5" fill="none" stroke="#aaa" stroke-width="1"/>
</svg>
<span class="t" style="left:1213px;top:7px;font-size:11.5px;color:#f0f0f0">20:45</span>
<span class="t" style="left:1200px;top:24px;font-size:11.3px;color:#f0f0f0">05.11.2016</span>
<div class="a" style="left:1266px;top:2px;width:14px;height:38px;border:1px solid #50565c;border-right:none;border-radius:2px 0 0 2px;background:linear-gradient(#2e343a,#161a1e)"></div>

</div>
</body></html>
